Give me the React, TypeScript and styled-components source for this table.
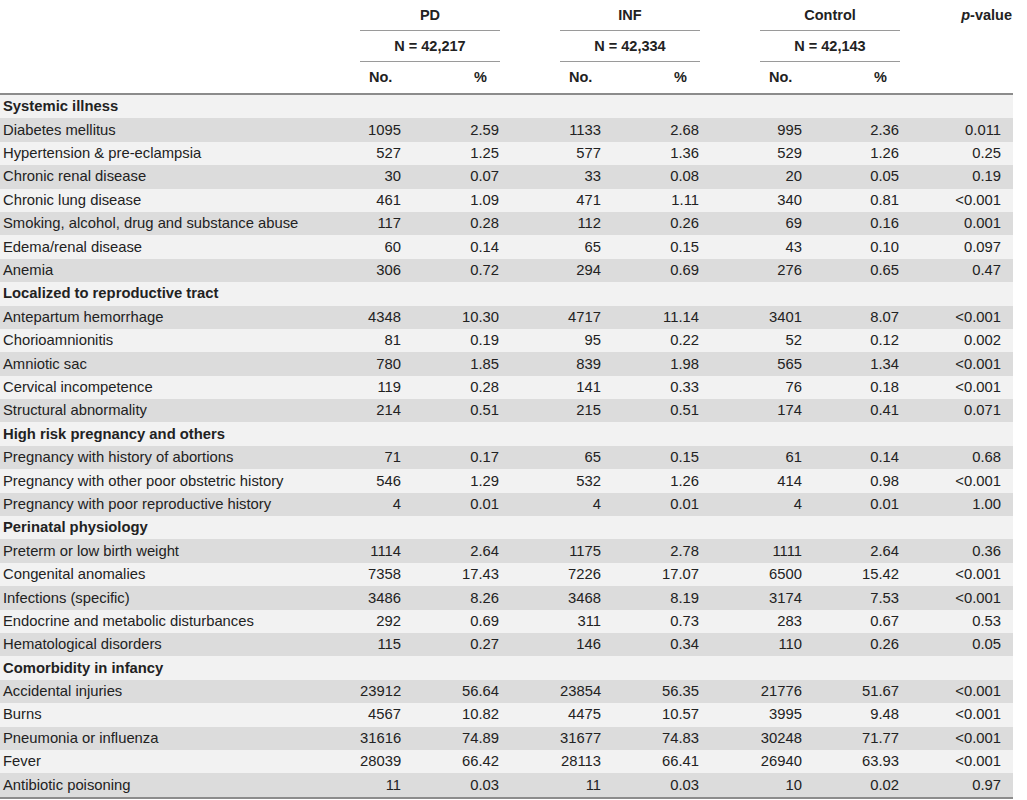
import React from "react";
import styled, { createGlobalStyle } from "styled-components";

const Global = createGlobalStyle`
  html, body { margin: 0; padding: 0; background: #ffffff; }
  body { font-family: "Liberation Sans", Arial, sans-serif; color: #222; }
`;

const COLS = "360px 70px 70px 60px 70px 70px 60px 70px 70px 113px";

const Table = styled.div`
  width: 1013px;
  font-size: 14.8px;
  line-height: 1;
`;

const Header = styled.div`
  display: grid;
  grid-template-columns: ${COLS};
  grid-template-rows: 31px 31px 31px;
  border-bottom: 2px solid #8c8c8c;
  font-weight: bold;
  font-size: 14.5px;
`;

const GroupCell = styled.div<{ $col: number; $row: number }>`
  grid-column: ${(p) => p.$col} / span 2;
  grid-row: ${(p) => p.$row};
  display: flex;
  align-items: center;
  justify-content: center;
  border-bottom: 1px solid #9a9a9a;
`;

const SubHead = styled.div<{ $col: number; $align: "left" | "right"; $pad: number }>`
  grid-column: ${(p) => p.$col};
  grid-row: 3;
  display: flex;
  align-items: center;
  justify-content: ${(p) => (p.$align === "left" ? "flex-start" : "flex-end")};
  padding-left: ${(p) => (p.$align === "left" ? p.$pad : 0)}px;
  padding-right: ${(p) => (p.$align === "right" ? p.$pad : 0)}px;
`;

const PHead = styled.div`
  grid-column: 10;
  grid-row: 1;
  display: flex;
  align-items: center;
  justify-content: flex-end;
  padding-right: 1px;
  em { font-style: italic; }
`;

const Body = styled.div`
  border-bottom: 2px solid #8c8c8c;
`;

const Row = styled.div<{ $shade: boolean }>`
  display: grid;
  grid-template-columns: ${COLS};
  height: 23.4px;
  align-items: center;
  background: ${(p) => (p.$shade ? "#dcdcdc" : "#f2f2f2")};
`;

const Label = styled.div<{ $section?: boolean }>`
  padding-left: 3px;
  font-weight: ${(p) => (p.$section ? "bold" : "normal")};
  white-space: nowrap;
`;

const NumCell = styled.div<{ $pad: number }>`
  text-align: right;
  padding-right: ${(p) => p.$pad}px;
  white-space: nowrap;
`;

const Spacer = styled.div``;

type Data = [string, string, string, string, string, string, string, string];
type Item = { section: string } | { data: Data };

const items: Item[] = [
  { section: "Systemic illness" },
  { data: ["Diabetes mellitus", "1095", "2.59", "1133", "2.68", "995", "2.36", "0.011"] },
  { data: ["Hypertension & pre-eclampsia", "527", "1.25", "577", "1.36", "529", "1.26", "0.25"] },
  { data: ["Chronic renal disease", "30", "0.07", "33", "0.08", "20", "0.05", "0.19"] },
  { data: ["Chronic lung disease", "461", "1.09", "471", "1.11", "340", "0.81", "<0.001"] },
  { data: ["Smoking, alcohol, drug and substance abuse", "117", "0.28", "112", "0.26", "69", "0.16", "0.001"] },
  { data: ["Edema/renal disease", "60", "0.14", "65", "0.15", "43", "0.10", "0.097"] },
  { data: ["Anemia", "306", "0.72", "294", "0.69", "276", "0.65", "0.47"] },
  { section: "Localized to reproductive tract" },
  { data: ["Antepartum hemorrhage", "4348", "10.30", "4717", "11.14", "3401", "8.07", "<0.001"] },
  { data: ["Chorioamnionitis", "81", "0.19", "95", "0.22", "52", "0.12", "0.002"] },
  { data: ["Amniotic sac", "780", "1.85", "839", "1.98", "565", "1.34", "<0.001"] },
  { data: ["Cervical incompetence", "119", "0.28", "141", "0.33", "76", "0.18", "<0.001"] },
  { data: ["Structural abnormality", "214", "0.51", "215", "0.51", "174", "0.41", "0.071"] },
  { section: "High risk pregnancy and others" },
  { data: ["Pregnancy with history of abortions", "71", "0.17", "65", "0.15", "61", "0.14", "0.68"] },
  { data: ["Pregnancy with other poor obstetric history", "546", "1.29", "532", "1.26", "414", "0.98", "<0.001"] },
  { data: ["Pregnancy with poor reproductive history", "4", "0.01", "4", "0.01", "4", "0.01", "1.00"] },
  { section: "Perinatal physiology" },
  { data: ["Preterm or low birth weight", "1114", "2.64", "1175", "2.78", "1111", "2.64", "0.36"] },
  { data: ["Congenital anomalies", "7358", "17.43", "7226", "17.07", "6500", "15.42", "<0.001"] },
  { data: ["Infections (specific)", "3486", "8.26", "3468", "8.19", "3174", "7.53", "<0.001"] },
  { data: ["Endocrine and metabolic disturbances", "292", "0.69", "311", "0.73", "283", "0.67", "0.53"] },
  { data: ["Hematological disorders", "115", "0.27", "146", "0.34", "110", "0.26", "0.05"] },
  { section: "Comorbidity in infancy" },
  { data: ["Accidental injuries", "23912", "56.64", "23854", "56.35", "21776", "51.67", "<0.001"] },
  { data: ["Burns", "4567", "10.82", "4475", "10.57", "3995", "9.48", "<0.001"] },
  { data: ["Pneumonia or influenza", "31616", "74.89", "31677", "74.83", "30248", "71.77", "<0.001"] },
  { data: ["Fever", "28039", "66.42", "28113", "66.41", "26940", "63.93", "<0.001"] },
  { data: ["Antibiotic poisoning", "11", "0.03", "11", "0.03", "10", "0.02", "0.97"] },
];

const groups = [
  { name: "PD", n: "N = 42,217", col: 2 },
  { name: "INF", n: "N = 42,334", col: 5 },
  { name: "Control", n: "N = 42,143", col: 8 },
];

export default function App() {
  return (
    <>
      <Global />
      <Table>
        <Header>
          {groups.map((g) => (
            <React.Fragment key={g.name}>
              <GroupCell $col={g.col} $row={1}>{g.name}</GroupCell>
              <GroupCell $col={g.col} $row={2}>{g.n}</GroupCell>
              <SubHead $col={g.col} $align="left" $pad={9}>No.</SubHead>
              <SubHead $col={g.col + 1} $align="right" $pad={13}>%</SubHead>
            </React.Fragment>
          ))}
          <PHead>
            <em>p</em>-value
          </PHead>
        </Header>
        <Body>
          {items.map((it, i) => {
            const shade = i % 2 === 1;
            if ("section" in it) {
              return (
                <Row key={i} $shade={shade}>
                  <Label $section>{it.section}</Label>
                </Row>
              );
            }
            const d = it.data;
            return (
              <Row key={i} $shade={shade}>
                <Label>{d[0]}</Label>
                <NumCell $pad={29}>{d[1]}</NumCell>
                <NumCell $pad={1}>{d[2]}</NumCell>
                <Spacer />
                <NumCell $pad={29}>{d[3]}</NumCell>
                <NumCell $pad={1}>{d[4]}</NumCell>
                <Spacer />
                <NumCell $pad={28}>{d[5]}</NumCell>
                <NumCell $pad={1}>{d[6]}</NumCell>
                <NumCell $pad={12}>{d[7]}</NumCell>
              </Row>
            );
          })}
        </Body>
      </Table>
    </>
  );
}
